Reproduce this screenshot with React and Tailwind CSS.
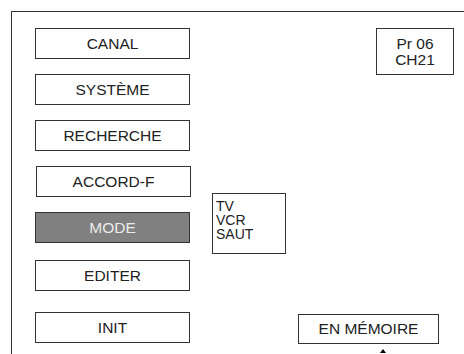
const menu = [
  { label: "CANAL", mt: "mt-0" },
  { label: "SYSTÈME", mt: "mt-[15px]" },
  { label: "RECHERCHE", mt: "mt-[15px]" },
  { label: "ACCORD-F", mt: "mt-[15px]", shift: true },
  { label: "MODE", mt: "mt-[15px]", active: true },
  { label: "EDITER", mt: "mt-[17px]" },
  { label: "INIT", mt: "mt-[21px]" },
];

const App = () => {
  return (
    <div
      className="w-[464px] h-[354px] overflow-hidden bg-white text-[#222]"
      style={{ fontFamily: '"Liberation Sans", Arial, sans-serif' }}
    >
      <div className="ml-[11px] mt-[11px] h-[400px] border-l border-t border-[#333] flex">
        {/* Menu */}
        <div className="flex flex-col pl-[23px] pt-[16px]">
          {menu.map((item) => (
            <div
              key={item.label}
              className={`${item.mt} ${item.shift ? "ml-px" : ""} w-[155px] h-[31px] flex items-center justify-center border border-[#333] text-[15.5px] ${
                item.active ? "bg-[#808080] text-[#ececec]" : "bg-white"
              }`}
            >
              {item.label}
            </div>
          ))}
        </div>

        {/* Mode options */}
        <div className="ml-[21px] pt-[181px]">
          <div className="w-[74px] h-[61px] border border-[#333] pl-[3px] pt-[5px] text-[14px] leading-[14px]">
            <div>TV</div>
            <div>VCR</div>
            <div>SAUT</div>
          </div>
        </div>

        {/* Status */}
        <div className="ml-[12px] w-[156px] pt-[16px] h-[332px] flex flex-col justify-between">
          <div className="self-end w-[78px] h-[47px] border border-[#333] flex flex-col items-center justify-center text-[15.5px] leading-[16px]">
            <span>Pr 06</span>
            <span>CH21</span>
          </div>
          <div className="relative w-[141px] h-[30px] border border-[#333] flex items-center justify-center text-[15.5px]">
            EN MÉMOIRE
            <span className="absolute left-[81px] top-[34px] w-0 h-0 border-l-[3px] border-r-[3px] border-b-[4px] border-l-transparent border-r-transparent border-b-black" />
          </div>
        </div>
      </div>
    </div>
  );
};

export default App;
